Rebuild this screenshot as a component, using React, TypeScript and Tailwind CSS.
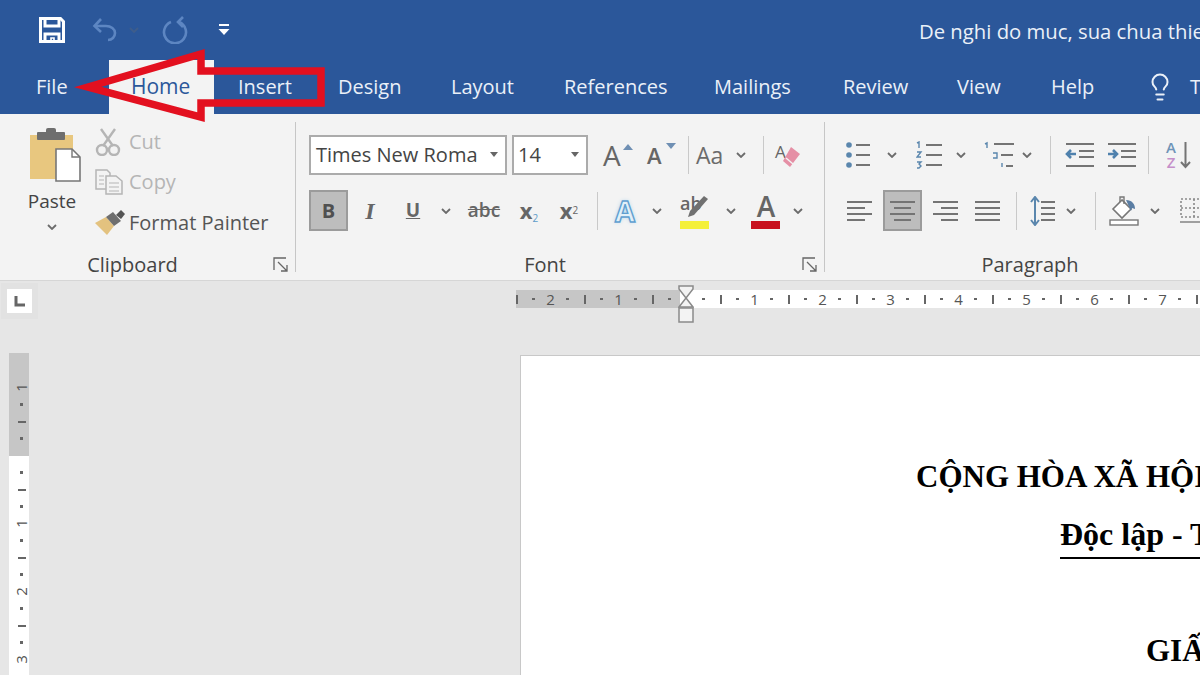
import React from "react";
import { Lightbulb } from "lucide-react";

const tabs = [
  { label: "Insert", w: "w-[100px]" },
  { label: "Design", w: "w-[113px]" },
  { label: "Layout", w: "w-[113px]" },
  { label: "References", w: "w-[150px]" },
  { label: "Mailings", w: "w-[129px]" },
  { label: "Review", w: "w-[114px]" },
  { label: "View", w: "w-[94px]" },
  { label: "Help", w: "w-[96px]" },
];

const Chevron = ({ className = "w-[24px]" }: { className?: string }) => (
  <div className={`flex shrink-0 justify-center ${className}`}>
    <svg width="10" height="6" viewBox="0 0 10 6" fill="none" stroke="#6b6b6b" strokeWidth="1.8">
      <path d="M1 1l4 4 4-4" />
    </svg>
  </div>
);

const Sep = ({ className = "w-[14px]" }: { className?: string }) => (
  <div className={`flex shrink-0 justify-center ${className}`}>
    <div className="h-[38px] w-px bg-[#c9c9c9]" />
  </div>
);

const Launcher = () => (
  <svg width="16" height="16" viewBox="0 0 16 16" fill="none" stroke="#666666" strokeWidth="1.3">
    <path d="M1 13V1h12" />
    <path d="M5 5l9 9M8 14h6V8" />
  </svg>
);

const GroupLabel = ({ children }: { children: React.ReactNode }) => (
  <div className="mt-auto flex h-[14px] items-center">
    <div className="flex-1 text-center text-[20px] leading-[14px] text-[#444444]">{children}</div>
    <div className="flex w-[30px] justify-end pr-[6px]">
      <Launcher />
    </div>
  </div>
);

const Lines = ({ rows }: { rows: [number, number][] }) => (
  <svg className="shrink-0" width="26" height="22" viewBox="0 0 26 22" stroke="#747474" strokeWidth="2">
    {rows.map(([a, b], i) => (
      <path key={i} d={`M${a} ${2 + i * 6}H${b}`} />
    ))}
  </svg>
);

const TitleBar = () => (
  <div className="flex h-[60px] items-center bg-[#2b579a]">
    <svg className="ml-[39px] shrink-0" width="26" height="26" viewBox="0 0 26 26" fill="none" stroke="#ffffff" strokeWidth="3">
      <path d="M1.5 1.5h20l3 3v20h-23z" />
      <path d="M6 2v7h14V2M6 24v-7h14v7" />
      <path d="M12 24v-3h3v3" strokeWidth="1.6" />
    </svg>
    <svg className="ml-[27px] shrink-0" width="26" height="26" viewBox="0 0 26 26" fill="none" stroke="#5d86c2" strokeWidth="2.6">
      <path d="M9 2L2.5 9l6.5 6" />
      <path d="M3 9h11c5 0 9 3 9 7s-3 7-7 7" />
    </svg>
    <Chevron className="ml-[5px] w-[22px] opacity-30" />
    <svg className="ml-[17px] shrink-0" width="26" height="28" viewBox="0 0 26 28" fill="none" stroke="#5d86c2" strokeWidth="2.6">
      <path d="M9 6a11 11 0 1 0 8 0" />
      <path d="M21 1l-5 5 5 5" />
    </svg>
    <svg className="ml-[30px] shrink-0" width="12" height="14" viewBox="0 0 12 14" fill="#ffffff">
      <rect x="1" y="1" width="10" height="2" />
      <path d="M0.5 6h11L6 12z" />
    </svg>
    <div className="ml-[689px] mt-[2px] shrink-0 whitespace-nowrap text-[20.3px] text-[#eaf0f8]">De nghi do muc, sua chua thiet bi</div>
  </div>
);

const TabRow = () => (
  <div className="flex h-[54px] items-center whitespace-nowrap bg-[#2b579a] text-[20px] text-[#eaf0f8]">
    <div className="ml-[12px] w-[97px] shrink-0 pl-[24px]">File</div>
    <div className="flex h-full w-[105px] shrink-0 items-center bg-[#f3f3f3] pl-[22px] text-[21px] text-[#2b579a]">Home</div>
    {tabs.map((t) => (
      <div key={t.label} className={`shrink-0 pl-[24px] ${t.w}`}>
        {t.label}
      </div>
    ))}
    <Lightbulb className="ml-[22px] shrink-0 text-[#eaf0f8]" size={30} strokeWidth={1.6} />
    <div className="ml-[15px] shrink-0">Tell me</div>
  </div>
);

const Clipboard = () => (
  <div className="flex w-[296px] shrink-0 flex-col border-r border-[#c6c6c6]">
    <div className="flex">
      <div className="ml-[12px] flex w-[80px] flex-col items-center pt-[6px]">
        <svg className="ml-[6px]" width="52" height="54" viewBox="0 0 52 54">
          <rect x="1" y="7" width="43" height="44" fill="#e8c77f" />
          <rect x="8" y="4" width="28" height="8" rx="1" fill="#6e6e6e" />
          <rect x="17" y="0" width="10" height="6" rx="2" fill="#6e6e6e" />
          <path d="M27 21h16l8 8v24H27z" fill="#ffffff" stroke="#777777" strokeWidth="1.6" />
          <path d="M43 21v8h8" fill="none" stroke="#777777" strokeWidth="1.4" />
        </svg>
        <div className="mt-[6px] text-[19px] leading-[26px] text-[#444444]">Paste</div>
        <Chevron className="mt-[10px] w-[24px]" />
      </div>
      <div className="ml-[3px] flex flex-col text-[20px] leading-[40px]">
        <div className="flex h-[40px] items-center text-[#b5b5b5]">
          <div className="flex w-[34px] justify-start">
            <svg width="26" height="28" viewBox="0 0 26 28" fill="none" stroke="#b5b5b5" strokeWidth="2.4">
              <path d="M6 1l12 17M20 1L8 18" />
              <circle cx="7" cy="22" r="5" />
              <circle cx="19" cy="22" r="5" />
            </svg>
          </div>
          Cut
        </div>
        <div className="flex h-[40px] items-center text-[#b5b5b5]">
          <div className="flex w-[34px] justify-start">
            <svg width="28" height="26" viewBox="0 0 28 26" fill="#f3f3f3" stroke="#b5b5b5" strokeWidth="1.5">
              <path d="M1 1h11l3 3v16H1z" />
              <path d="M11 7h10l6 5v13H11z" />
              <path d="M14 14h10M14 18h10M14 22h10M4 7h5M4 11h5M4 15h5" strokeWidth="1.2" />
            </svg>
          </div>
          Copy
        </div>
        <div className="flex h-[40px] items-center pt-[2px] text-[#555555]">
          <div className="flex w-[34px] justify-start">
            <svg width="30" height="26" viewBox="0 0 30 26">
              <path d="M0 13l11-6 8 9-7 9z" fill="#e3c27f" />
              <path d="M11 7l7-5 8 9-7 5z" fill="#6e6e6e" />
              <path d="M21 5l5-5 4 4-4 5z" fill="#555555" />
            </svg>
          </div>
          Format Painter
        </div>
      </div>
    </div>
    <GroupLabel>Clipboard</GroupLabel>
  </div>
);

const FontGroup = () => (
  <div className="flex w-[529px] shrink-0 flex-col border-r border-[#c6c6c6] pt-[13px]">
    <div className="flex h-[40px] items-center pl-[13px]">
      <div className="flex h-full w-[198px] shrink-0 items-center border-2 border-[#ababab] bg-white pl-[5px] pr-[6px] text-[20px] text-[#444444]">
        <span className="flex-1 whitespace-nowrap">Times New Roma</span>
        <svg width="10" height="6" viewBox="0 0 10 6" fill="#666666"><path d="M1 0h8L5 5z" /></svg>
      </div>
      <div className="ml-[5px] flex h-full w-[76px] shrink-0 items-center border-2 border-[#ababab] bg-white pl-[4px] pr-[6px] text-[20px] text-[#444444]">
        <span className="flex-1">14</span>
        <svg width="10" height="6" viewBox="0 0 10 6" fill="#666666"><path d="M1 0h8L5 5z" /></svg>
      </div>
      {/* grow / shrink */}
      <div className="ml-[15px] flex w-[24px] shrink-0 items-end text-[28px] leading-none text-[#666666]">A</div>
      <svg className="mb-[16px] -ml-[4px] shrink-0" width="10" height="6" viewBox="0 0 10 6" fill="#6f8fb3"><path d="M5 0l5 6H0z" /></svg>
      <div className="ml-[14px] w-[20px] shrink-0 text-[22px] font-semibold leading-none text-[#666666]">A</div>
      <svg className="mb-[18px] -ml-[1px] shrink-0" width="10" height="6" viewBox="0 0 10 6" fill="#6f8fb3"><path d="M0 0h10L5 6z" /></svg>
      <Sep className="ml-[5px] w-[14px]" />
      <div className="ml-[1px] w-[30px] shrink-0 text-[23px] leading-none text-[#6b6b6b]">Aa</div>
      <Chevron className="ml-[5px] w-[20px]" />
      <Sep className="ml-[5px] w-[14px]" />
      <div className="relative ml-[5px] h-[30px] w-[28px] shrink-0">
        <span className="text-[17px] leading-none text-[#666666]">A</span>
        <svg className="absolute left-0 top-0" width="28" height="30" viewBox="0 0 28 30">
          <path d="M16 7l9 7-10 13-7-6z" fill="#e58fa5" />
          <path d="M11 18l7 6" stroke="#f3f3f3" strokeWidth="1.5" />
        </svg>
      </div>
    </div>
    <div className="mt-[15px] flex h-[41px] items-center pl-[13px]">
      <div className="flex h-full w-[39px] shrink-0 items-center justify-center border-2 border-[#9b9b9b] bg-[#bdbdbd] text-[20px] font-bold text-[#505050]">B</div>
      <div className="w-[44px] shrink-0 text-center font-['Liberation_Serif',serif] text-[24px] font-bold italic text-[#666666]">I</div>
      <div className="w-[42px] shrink-0 text-center text-[19px] font-bold text-[#666666] underline">U</div>
      <Chevron className="w-[24px]" />
      <div className="w-[52px] shrink-0 text-center text-[19px] font-semibold text-[#666666] line-through">abc</div>
      <div className="w-[38px] shrink-0 text-center text-[22px] font-bold text-[#666666]">x<sub className="text-[10px] font-normal text-[#5d9bc9]">2</sub></div>
      <div className="w-[42px] shrink-0 text-center text-[22px] font-bold text-[#666666]">x<sup className="text-[10px] font-normal text-[#666666]">2</sup></div>
      <Sep className="w-[14px]" />
      <div className="w-[42px] shrink-0 text-center text-[29px] font-bold leading-none text-[#e2f0f8] [-webkit-text-stroke:1.4px_#5f9fd0] [text-shadow:0_0_4px_#a9d0ea]">A</div>
      <Chevron className="w-[22px]" />
      <div className="relative ml-[2px] h-[36px] w-[50px] shrink-0">
        <div className="absolute left-[10px] top-[-3px] text-[18px] font-semibold leading-[26px] text-[#666666]">ab</div>
        <svg className="absolute left-[10px] top-0" width="30" height="26" viewBox="0 0 30 26">
          <path d="M24 3l4 3-14 16-6 2 2-6z" fill="#707070" />
        </svg>
        <div className="absolute bottom-0 left-[10px] h-[8px] w-[29px] bg-[#f4f03a]" />
      </div>
      <Chevron className="w-[21px]" />
      <div className="relative h-[36px] w-[50px] shrink-0">
        <div className="absolute left-[10px] top-[-4px] w-[30px] text-center text-[28px] font-semibold leading-[34px] text-[#666666]">A</div>
        <div className="absolute bottom-0 left-[10px] h-[8px] w-[29px] bg-[#c8101e]" />
      </div>
      <Chevron className="w-[14px]" />
    </div>
    <GroupLabel>Font</GroupLabel>
  </div>
);

const ParagraphGroup = () => (
  <div className="flex w-[440px] shrink-0 flex-col pt-[13px]">
    <div className="flex h-[40px] items-center pl-[21px]">
      <svg className="shrink-0" width="26" height="28" viewBox="0 0 26 28" stroke="#747474" strokeWidth="2" fill="#5a86ad">
        <circle cx="3" cy="4" r="2.8" stroke="none" />
        <circle cx="3" cy="14" r="2.8" stroke="none" />
        <circle cx="3" cy="24" r="2.8" stroke="none" />
        <path d="M10 4h14M10 14h14M10 24h14" />
      </svg>
      <Chevron className="ml-[8px] w-[24px]" />
      <svg className="ml-[12px] shrink-0" width="26" height="28" viewBox="0 0 26 28" stroke="#747474" strokeWidth="2">
        <path d="M10 4h16M10 14h16M10 24h16" />
        <path d="M1 2l2-1v6M1 11h4l-4 5h4M1 21h4l-2 2 2 2-2 2H1" fill="none" stroke="#5a86ad" strokeWidth="1.4" />
      </svg>
      <Chevron className="ml-[7px] w-[24px]" />
      <svg className="ml-[11px] shrink-0" width="30" height="28" viewBox="0 0 30 28" fill="none" stroke="#747474" strokeWidth="2">
        <path d="M10 3h20M17 14h12M22 25h7" />
        <path d="M1 3l2-1v5M9 12h4v5H9M18 22v4" stroke="#5a86ad" strokeWidth="1.4" />
      </svg>
      <Chevron className="ml-[1px] w-[24px]" />
      <Sep className="ml-[4px] w-[14px]" />
      <svg className="ml-[8px] shrink-0" width="30" height="26" viewBox="0 0 30 26" fill="none" stroke="#747474" strokeWidth="2">
        <path d="M1 2h28M14 9h15M14 15h15M1 24h28" />
        <path d="M11 12H2M6 8l-4 4 4 4" stroke="#4f81ad" strokeWidth="2.6" />
      </svg>
      <svg className="ml-[12px] shrink-0" width="30" height="26" viewBox="0 0 30 26" fill="none" stroke="#747474" strokeWidth="2">
        <path d="M1 2h28M14 9h15M14 15h15M1 24h28" />
        <path d="M1 12h9M6 8l4 4-4 4" stroke="#4f81ad" strokeWidth="2.6" />
      </svg>
      <Sep className="ml-[4px] w-[14px]" />
      <div className="ml-[10px] flex h-[30px] w-[12px] shrink-0 flex-col items-center text-[15px] font-semibold leading-[15px]">
        <span className="text-[#6f94b8]">A</span>
        <span className="text-[#c58fc9]">Z</span>
      </div>
      <svg className="ml-[3px] shrink-0" width="11" height="28" viewBox="0 0 11 28" fill="none" stroke="#747474" strokeWidth="2">
        <path d="M5.5 1v25M1 21l4.5 5 4.5-5" />
      </svg>
    </div>
    <div className="mt-[15px] flex h-[41px] items-center pl-[22px]">
      <Lines rows={[[0, 25], [0, 18], [0, 25], [0, 18]]} />
      <div className="ml-[10px] flex h-full w-[39px] shrink-0 items-center justify-center border-2 border-[#9b9b9b] bg-[#bdbdbd]">
        <Lines rows={[[0, 25], [4, 21], [0, 25], [4, 21]]} />
      </div>
      <div className="ml-[11px] shrink-0"><Lines rows={[[0, 25], [8, 25], [0, 25], [8, 25]]} /></div>
      <div className="ml-[16px] shrink-0"><Lines rows={[[0, 25], [0, 25], [0, 25], [0, 25]]} /></div>
      <Sep className="ml-[8px] w-[14px]" />
      <svg className="ml-[7px] shrink-0" width="26" height="30" viewBox="0 0 26 30" fill="none" stroke="#747474" strokeWidth="2">
        <path d="M11 6h14M11 12h14M11 18h14M11 24h14" />
        <path d="M5 1v28M1 6l4-5 4 5M1 24l4 5 4-5" stroke="#5a86ad" strokeWidth="2" />
      </svg>
      <Chevron className="ml-[3px] w-[24px]" />
      <Sep className="ml-[5px] w-[14px]" />
      <svg className="ml-[7px] shrink-0" width="30" height="30" viewBox="0 0 30 30" fill="none">
        <path d="M13 4l-9 9 9 9 9-9z" fill="#ffffff" stroke="#777777" strokeWidth="1.6" />
        <path d="M11 6V1h4v7" stroke="#777777" strokeWidth="1.4" />
        <path d="M17 4c6 0 9 4 9 9l-3-1-1 3" fill="#5a7da3" />
        <rect x="1" y="24" width="28" height="5" fill="#ffffff" stroke="#777777" strokeWidth="1.4" />
      </svg>
      <Chevron className="ml-[4px] w-[24px]" />
      <svg className="ml-[13px] shrink-0" width="28" height="26" viewBox="0 0 28 26" fill="none" stroke="#8a8a8a" strokeWidth="1.6" strokeDasharray="2 2">
        <path d="M1 1h26v18H1zM14 1v18M1 10h26" />
        <path d="M0 24h28" strokeDasharray="none" />
      </svg>
    </div>
    <GroupLabel>Paragraph</GroupLabel>
  </div>
);

const Ribbon = () => (
  <div className="flex h-[167px] border-b border-[#d6d6d6] bg-[#f3f3f3] py-[8px]">
    <Clipboard />
    <FontGroup />
    <ParagraphGroup />
  </div>
);

const hMarks = Array.from({ length: 43 }, (_, k) => k - 10);
const vMarks = Array.from({ length: 18 }, (_, k) => k - 4);

const Mark = ({ rel, vertical }: { rel: number; vertical?: boolean }) => {
  if (rel === 0) return null;
  if (rel % 4 === 0) {
    return <span className={vertical ? "-rotate-90" : ""}>{Math.abs(rel) / 4}</span>;
  }
  if (rel % 2 === 0) {
    return <div className={`bg-[#666666] ${vertical ? "h-[2px] w-[8px]" : "h-[9px] w-[2px]"}`} />;
  }
  return <div className="h-[2.5px] w-[2.5px] bg-[#666666]" />;
};

const RulerStrip = () => (
  <div className="flex h-[72px] pt-[9px]">
    <div className="ml-[7px] flex h-[24px] w-[25px] shrink-0 -translate-y-[1px] items-center justify-center bg-white ring-[6px] ring-[#e2e2e2]">
      <svg width="12" height="12" viewBox="0 0 12 12" fill="none" stroke="#666666" strokeWidth="3">
        <path d="M2 1v9h9" />
      </svg>
    </div>
    <div className="relative ml-[484px] h-[18px] min-w-0 flex-1 bg-[linear-gradient(to_right,#c6c6c6_164px,#ffffff_164px)]">
      <div className="-ml-[8px] flex h-full items-center overflow-hidden text-[15px] leading-none text-[#555555]">
        {hMarks.map((rel) => (
          <div key={rel} className="flex w-[17px] shrink-0 justify-center">
            <Mark rel={rel} />
          </div>
        ))}
      </div>
      <svg className="absolute left-[162px] top-[-5px]" width="16" height="38" viewBox="0 0 16 38" fill="#f3f3f3" stroke="#8a8a8a" strokeWidth="1.5">
        <path d="M1 1h14v3L8 13 15 22H1l7-9L1 4z" />
        <rect x="1" y="23" width="14" height="14" />
      </svg>
    </div>
  </div>
);

const VerticalRuler = () => (
  <div className="ml-[9px] h-[322px] w-[20px] shrink-0 overflow-hidden bg-[linear-gradient(to_bottom,#c6c6c6_103px,#ffffff_103px)] pl-[5px] pt-[26px]">
    <div className="flex flex-col text-[15px] leading-none text-[#555555]">
      {vMarks.map((rel) => (
        <div key={rel} className="flex h-[17px] shrink-0 items-center justify-center">
          <Mark rel={rel} vertical />
        </div>
      ))}
    </div>
  </div>
);

const Page = () => (
  <div className="ml-[491px] mt-[2px] w-[1428px] shrink-0 border-l border-t border-[#c8c8c8] bg-white font-['Liberation_Serif',serif] font-bold text-black">
    <div className="ml-[395px] mt-[99px] whitespace-nowrap text-[31px] leading-[44px]">CỘNG HÒA XÃ HỘI CHỦ NGHĨA VIỆT NAM</div>
    <div className="ml-[539px] mt-[14px] w-fit whitespace-nowrap border-b-2 border-black pb-[2px] text-[32px] leading-[42px]">Độc lập - Tự do - Hạnh phúc</div>
    <div className="ml-[625px] mt-[70px] whitespace-nowrap text-[31px] leading-[44px]">GIẤY ĐỀ NGHỊ</div>
  </div>
);

export default function App() {
  return (
    <div className="relative h-[675px] w-[1200px] overflow-hidden bg-[#e6e6e6] font-['Open_Sans',sans-serif]">
      <TitleBar />
      <TabRow />
      <Ribbon />
      <RulerStrip />
      <div className="flex">
        <VerticalRuler />
        <Page />
      </div>
      {/* red arrow drawn over the tabs */}
      <svg className="absolute left-0 top-0" width="400" height="130" viewBox="0 0 400 130" fill="none" stroke="#e3101f" strokeWidth="7.5" strokeLinejoin="miter">
        <path d="M88 87L201 54V71H321V103H201V117Z" />
      </svg>
    </div>
  );
}
